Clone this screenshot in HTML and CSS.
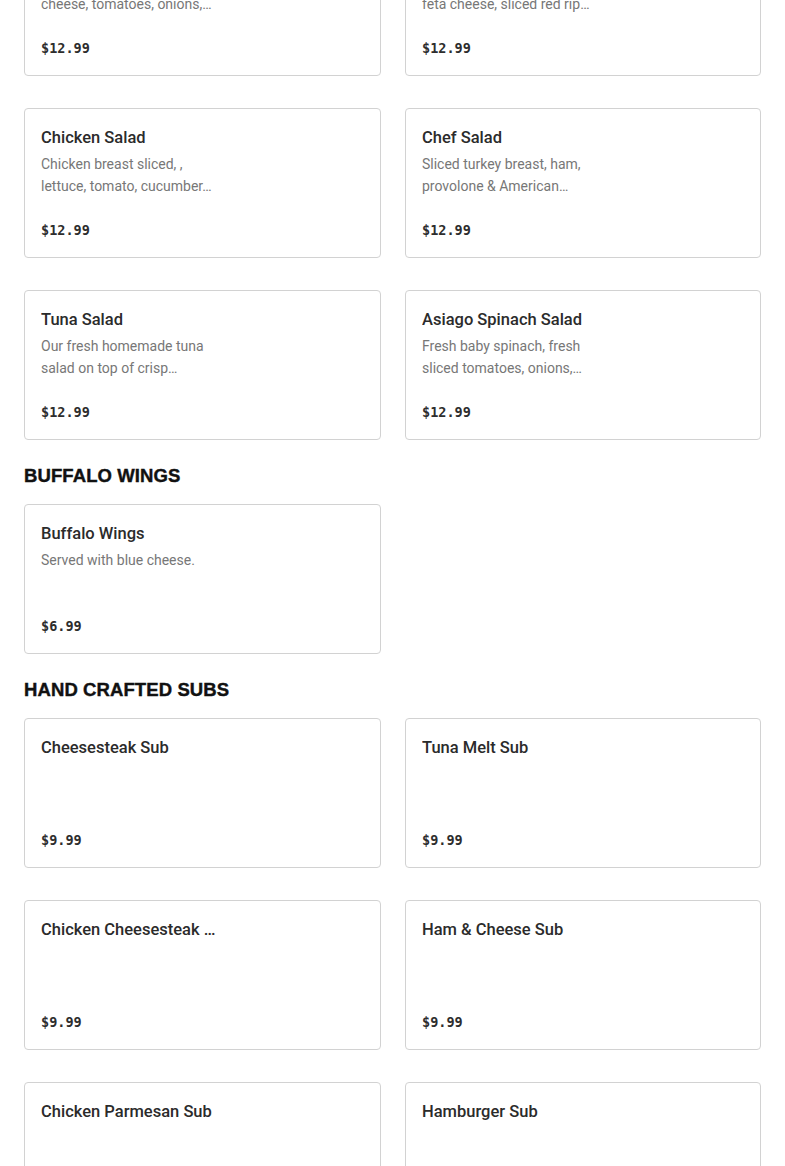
FILE: index.html
```html
<!DOCTYPE html>
<html lang="en">
<head>
<meta charset="utf-8">
<link rel="stylesheet" href="styles.css">
</head>
<body>
<main class="menu">
  <section class="section">
    <div class="grid">
      <div class="card"><div class="title">Garden Salad</div><div class="desc">Crisp lettuce, American cheese, tomatoes, onions, cucumbers, peppers and croutons.</div><div class="price">$12.99</div></div>
      <div class="card"><div class="title">Greek Salad</div><div class="desc">Lettuce, tomatoes, onions, feta cheese, sliced red ripe olives and pepperoncini.</div><div class="price">$12.99</div></div>
      <div class="card"><div class="title">Chicken Salad</div><div class="desc">Chicken breast sliced, , lettuce, tomato, cucumber, onions and croutons.</div><div class="price">$12.99</div></div>
      <div class="card"><div class="title">Chef Salad</div><div class="desc">Sliced turkey breast, ham, provolone &amp; American cheese, lettuce and tomato.</div><div class="price">$12.99</div></div>
      <div class="card"><div class="title">Tuna Salad</div><div class="desc">Our fresh homemade tuna salad on top of crisp lettuce and tomato.</div><div class="price">$12.99</div></div>
      <div class="card"><div class="title">Asiago Spinach Salad</div><div class="desc">Fresh baby spinach, fresh sliced tomatoes, onions, asiago cheese and croutons.</div><div class="price">$12.99</div></div>
    </div>
  </section>
  <section class="section">
    <h2 class="heading">BUFFALO WINGS</h2>
    <div class="grid">
      <div class="card"><div class="title">Buffalo Wings</div><div class="desc">Served with blue cheese.</div><div class="price">$6.99</div></div>
    </div>
  </section>
  <section class="section">
    <h2 class="heading">HAND CRAFTED SUBS</h2>
    <div class="grid">
      <div class="card"><div class="title">Cheesesteak Sub</div><div class="price">$9.99</div></div>
      <div class="card"><div class="title">Tuna Melt Sub</div><div class="price">$9.99</div></div>
      <div class="card"><div class="title">Chicken Cheesesteak Sub</div><div class="price">$9.99</div></div>
      <div class="card"><div class="title">Ham &amp; Cheese Sub</div><div class="price">$9.99</div></div>
      <div class="card"><div class="title">Chicken Parmesan Sub</div><div class="price">$9.99</div></div>
      <div class="card"><div class="title">Hamburger Sub</div><div class="price">$9.99</div></div>
    </div>
  </section>
</main>
</body>
</html>
```
FILE: styles.css
```css
html, body {
  margin: 0;
  padding: 0;
  background: #ffffff;
}
body {
  font-family: Roboto, "Liberation Sans", sans-serif;
  color: #2d2d2d;
  overflow: hidden;
}
.menu {
  padding: 0 24px;
  margin-top: -74px;
}
.heading {
  margin: 24px 0 16px;
  font-family: "Liberation Sans", Arial, sans-serif;
  font-size: 18.5px;
  line-height: 24px;
  font-weight: 700;
  color: #111111;
  -webkit-text-stroke: 0.4px #111111;
  letter-spacing: 0.1px;
}
.grid {
  display: grid;
  grid-template-columns: 357px 356px;
  column-gap: 24px;
  row-gap: 32px;
}
.card {
  box-sizing: border-box;
  height: 150px;
  border: 1px solid #d2d2d2;
  border-radius: 4px;
  padding: 16px 16px 15px 16px;
  display: flex;
  flex-direction: column;
  background: #fff;
}
.title {
  font-size: 16.5px;
  line-height: 26px;
  font-weight: 500;
  color: #2b2b2b;
  white-space: nowrap;
  overflow: hidden;
  text-overflow: ellipsis;
  max-width: 175px;
}
.desc {
  margin-top: 2px;
  font-size: 14px;
  line-height: 22px;
  color: #777777;
  max-width: 172px;
  display: -webkit-box;
  -webkit-line-clamp: 2;
  -webkit-box-orient: vertical;
  overflow: hidden;
}
.price {
  margin-top: auto;
  font-family: "DejaVu Sans Mono", "Liberation Mono", monospace;
  font-weight: 700;
  font-size: 13.5px;
  line-height: 24px;
  color: #2d2d2d;
}
```
